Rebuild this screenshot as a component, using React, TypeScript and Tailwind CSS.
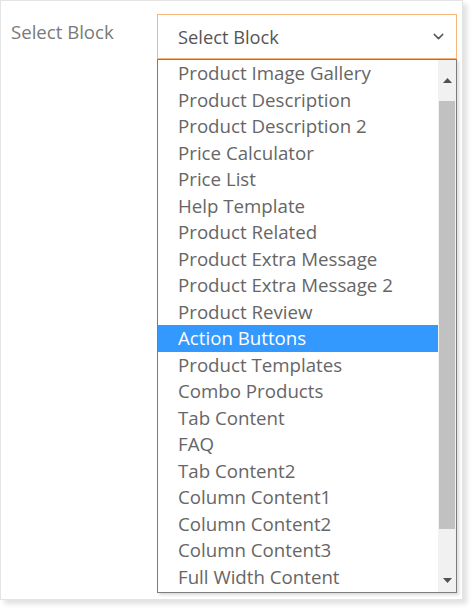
import { ChevronDown } from "lucide-react";

const ITEMS = [
  "Product Image Gallery",
  "Product Description",
  "Product Description 2",
  "Price Calculator",
  "Price List",
  "Help Template",
  "Product Related",
  "Product Extra Message",
  "Product Extra Message 2",
  "Product Review",
  "Action Buttons",
  "Product Templates",
  "Combo Products",
  "Tab Content",
  "FAQ",
  "Tab Content2",
  "Column Content1",
  "Column Content2",
  "Column Content3",
  "Full Width Content",
];

const ACTIVE = "Action Buttons";

export default function App() {
  return (
    <div className="h-[612px] w-[474px] bg-white font-['Open_Sans',sans-serif]">
      <div className="h-[600px] w-[463px] border border-[#e4e4e4] bg-white shadow-[4px_4px_5px_rgba(0,0,0,0.12)]">
        <div className="flex pt-[13px]">
          <label className="w-[156px] pl-[10px] pt-[3px] text-[18.6px] leading-[30px] text-[#7a7a7a]">
            Select Block
          </label>

          <div className="w-[300px]">
            {/* closed select */}
            <div className="flex h-[45px] items-center justify-between border border-[#f7b77b] bg-white pl-[20px] pr-[9px] text-[18.3px] text-[#555]">
              <span>Select Block</span>
              <ChevronDown className="h-[17px] w-[17px] text-[#555]" strokeWidth={2} />
            </div>

            {/* open list */}
            <div className="flex h-[534px] border border-[#7d7d7d] bg-white shadow-[2px_2px_3px_rgba(0,0,0,0.15)]">
              <ul className="flex-1">
                {ITEMS.map((item) => (
                  <li
                    key={item}
                    className={`h-[26.5px] pl-[20px] text-[18.7px] leading-[26.5px] ${
                      item === ACTIVE ? "bg-[#3399ff] text-white" : "text-[#666]"
                    }`}
                  >
                    {item}
                  </li>
                ))}
              </ul>

              {/* scrollbar */}
              <div className="flex w-[18px] flex-col bg-[#f1f1f1]">
                <div className="flex h-[41px] items-center justify-center">
                  <svg width="9" height="5" viewBox="0 0 9 5">
                    <path d="M0 5 L4.5 0 L9 5 Z" fill="#505050" />
                  </svg>
                </div>
                <div className="mx-[1px] h-[428px] bg-[#c1c1c1]" />
                <div className="flex flex-1 items-end justify-center pb-[9px]">
                  <svg width="9" height="5" viewBox="0 0 9 5">
                    <path d="M0 0 L4.5 5 L9 0 Z" fill="#505050" />
                  </svg>
                </div>
              </div>
            </div>
          </div>
        </div>
      </div>
    </div>
  );
}
